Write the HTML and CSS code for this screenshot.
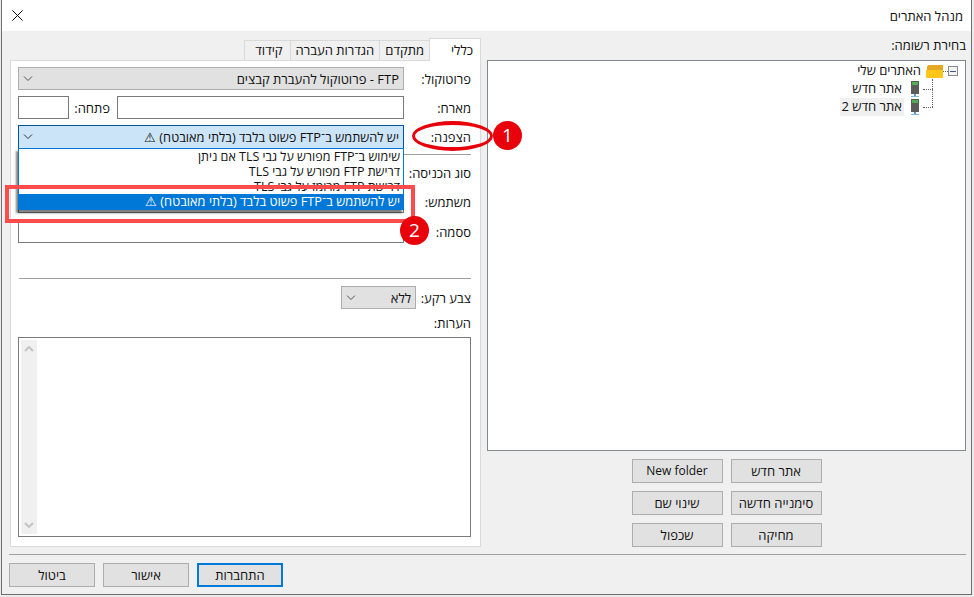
FILE: index.html
```html
<!DOCTYPE html>
<html lang="he" dir="rtl">
<head>
<meta charset="utf-8">
<title>מנהל האתרים</title>
<link rel="stylesheet" href="styles.css">
</head>
<body>
<div class="window">
  <header class="titlebar">
    <span class="title">מנהל האתרים</span>
    <svg class="close" width="11" height="11" viewBox="0 0 11 11"><path d="M.4.4l10.2 10.2M10.6.4L.4 10.6" stroke="#111" stroke-width="1" fill="none"/></svg>
  </header>
  <main class="main">
    <section class="sites">
      <div class="sites-label">בחירת רשומה:</div>
      <div class="tree">
        <div class="tree-row">
          <span class="expander"><span class="minus"></span></span><span class="dots-h"></span>
          <svg class="folder" width="17" height="13" viewBox="0 0 17 13"><path d="M1 5V1.500L2.500 0H17v5z" fill="#e5a823"/><path d="M0 5h17v7a1 1 0 0 1-1 1H1a1 1 0 0 1-1-1z" fill="#ffc61a"/></svg>
          <span class="node-text">האתרים שלי</span>
        </div>
        <div class="tree-row tree-child">
          <span class="dots-long"></span>
          <svg class="server" width="8" height="16" viewBox="0 0 8 16"><rect width="8" height="13" fill="#5a5a5a"/><rect x="1" y="1" width="6" height="3" fill="#4fae4f"/><rect x="3" y="13" width="2" height="2" fill="#5b9bd5"/><rect y="15" width="8" height="1" fill="#7db4e0"/></svg>
          <span class="node-text">אתר חדש</span>
        </div>
        <div class="tree-row tree-child">
          <span class="dots-long"></span>
          <svg class="server" width="8" height="16" viewBox="0 0 8 16"><rect width="8" height="13" fill="#5a5a5a"/><rect x="1" y="1" width="6" height="3" fill="#4fae4f"/><rect x="3" y="13" width="2" height="2" fill="#5b9bd5"/><rect y="15" width="8" height="1" fill="#7db4e0"/></svg>
          <span class="node-text node-selected">אתר חדש 2</span>
        </div>
      </div>
      <div class="site-buttons">
        <button class="btn">אתר חדש</button>
        <button class="btn btn-latin">New folder</button>
        <button class="btn">סימנייה חדשה</button>
        <button class="btn">שינוי שם</button>
        <button class="btn">מחיקה</button>
        <button class="btn">שכפול</button>
      </div>
    </section>
    <section class="settings">
      <nav class="tabs">
        <span class="tab tab-active">כללי</span>
        <span class="tab">מתקדם</span>
        <span class="tab">הגדרות העברה</span>
        <span class="tab tab-last">קידוד</span>
      </nav>
      <div class="panel">
        <div class="form-row">
          <label class="lbl">פרוטוקול:</label>
          <div class="select select-fill">
            <span>FTP - פרוטוקול להעברת קבצים</span>
            <svg class="chev" width="10" height="6" viewBox="0 0 10 6"><path d="M1 .5l4 4 4-4" fill="none" stroke="#555"/></svg>
          </div>
        </div>
        <div class="form-row row-host">
          <label class="lbl">מארח:</label>
          <div class="input input-host"></div>
          <label class="lbl-port">פתחה:</label>
          <div class="input input-port"></div>
        </div>
        <div class="form-row row-enc">
          <label class="lbl">הצפנה:</label>
          <div class="select select-fill select-focus">
            <span>יש להשתמש ב־FTP פשוט בלבד (בלתי מאובטח) ⚠</span>
            <svg class="chev" width="10" height="6" viewBox="0 0 10 6"><path d="M1 .5l4 4 4-4" fill="none" stroke="#333"/></svg>
          </div>
        </div>
        <div class="separator sep-top"></div>
        <div class="form-row row-login">
          <label class="lbl">סוג הכניסה:</label>
          <div class="input input-full"></div>
        </div>
        <div class="form-row row-user">
          <label class="lbl">משתמש:</label>
          <div class="input input-full"></div>
        </div>
        <div class="form-row row-pass">
          <label class="lbl">ססמה:</label>
          <div class="input input-full"></div>
        </div>
        <div class="separator sep-bottom"></div>
        <div class="form-row row-color">
          <label class="lbl lbl-color">צבע רקע:</label>
          <div class="select select-color">
            <span>ללא</span>
            <svg class="chev" width="10" height="6" viewBox="0 0 10 6"><path d="M1 .5l4 4 4-4" fill="none" stroke="#555"/></svg>
          </div>
        </div>
        <div class="notes-label">הערות:</div>
        <div class="notes">
          <div class="scrollbar">
            <svg width="10" height="6" viewBox="0 0 10 6"><path d="M1 5l4-4 4 4" fill="none" stroke="#c4c4c4" stroke-width="2"/></svg>
            <svg width="10" height="6" viewBox="0 0 10 6"><path d="M1 1l4 4 4-4" fill="none" stroke="#c4c4c4" stroke-width="2"/></svg>
          </div>
        </div>
      </div>
    </section>
  </main>
  <footer class="footer">
    <button class="btn btn-foot btn-default">התחברות</button>
    <button class="btn btn-foot">אישור</button>
    <button class="btn btn-foot">ביטול</button>
  </footer>
</div>

<ul class="dropdown">
  <li>שימוש ב־FTP מפורש על גבי TLS אם ניתן</li>
  <li>דרישת FTP מפורש על גבי TLS</li>
  <li>דרישת FTP מרומז על גבי TLS</li>
  <li class="dd-selected">יש להשתמש ב־FTP פשוט בלבד (בלתי מאובטח) ⚠</li>
</ul>

<div class="mark-ellipse"></div>
<div class="mark-badge badge-one">1</div>
<div class="mark-rect"></div>
<div class="mark-badge badge-two">2</div>
</body>
</html>
```
FILE: styles.css
```css
* { box-sizing: border-box; }
html, body { margin: 0; padding: 0; }
body {
  position: relative;
  width: 974px;
  height: 597px;
  overflow: hidden;
  background: #ececec;
  font: 13px/16px "Open Sans", "Liberation Sans", sans-serif;
  color: #111;
}
.window {
  width: 971px;
  height: 595px;
  margin-right: 2px;
  background: #f0f0f0;
  border: 1px solid #6e6e6e;
  border-top: 0;
  display: flex;
  flex-direction: column;
}
.titlebar {
  height: 31px;
  flex: none;
  background: #fff;
  display: flex;
  align-items: center;
  justify-content: space-between;
  padding: 0 8px 0 10px;
}
.main {
  flex: none;
  height: 524px;
  display: flex;
  gap: 6px;
  padding-left: 1px;
  margin: 0 5px 0 7px;
  border-bottom: 1px solid #a0a0a0;
}
.sites { width: 479px; flex: none; padding-top: 6px; }
.sites-label { height: 23px; }
.tree {
  height: 391px;
  background: #fff;
  border: 1px solid #828790;
  padding: 1px 7px 0 0;
}
.tree-row { display: flex; align-items: center; height: 18px; position: relative; }
.expander {
  width: 10px; height: 10px; flex: none;
  border: 1px solid #8a8a8a; background: #f2f2f2;
  display: flex; align-items: center; justify-content: center;
}
.minus { width: 6px; height: 1px; background: #3a5a8a; }
.dots-h { width: 5px; border-top: 1px dotted #666; }
.folder { margin-left: 3px; }
.node-text { padding: 0 2px; height: 18px; line-height: 17px; }
.tree-child { padding-right: 25px; }
.dots-long { width: 10px; margin-left: 4px; border-top: 1px dotted #666; }
.server { margin-left: 7px; }
.node-selected { background: #f0f0f0; }
.tree-child .dots-long::before {
  content: "";
  position: absolute;
  top: -1px;
  height: 10px;
  right: 25px;
  border-right: 1px dotted #666;
}
.tree-child + .tree-child .dots-long::before { top: -9px; height: 18px; }
.site-buttons {
  display: grid;
  grid-template-columns: 91px 91px;
  gap: 8px;
  justify-content: center;
  margin-top: 8px;
}
.btn {
  height: 24px;
  background: #e1e1e1;
  border: 1px solid #adadad;
  font: inherit;
  color: inherit;
  padding: 0;
}
.btn-latin { font-size: 12px; }
.settings { width: 471px; flex: none; padding-top: 6px; }
.tabs {
  display: flex;
  height: 23px;
  align-items: flex-end;
}
.tab {
  height: 20px;
  padding: 0 5px;
  background: #f0f0f0;
  border: 1px solid #d9d9d9;
  border-bottom: 0;
  border-right-width: 0;
  line-height: 19px;
  white-space: nowrap;
}
.tab-last { width: 46px; padding: 0 7px 0 0; }
.tab-active {
  height: 23px;
  width: 52px;
  padding: 0 7px;
  background: #fff;
  border-right-width: 1px;
  border-left-width: 1px;
  line-height: 22px;
  margin-bottom: -1px;
  position: relative;
  z-index: 1;
}
.panel {
  height: 487px;
  background: #fff;
  border: 1px solid #d9d9d9;
  padding: 6px 9px 0 7px;
}
.form-row { display: flex; align-items: center; height: 23px; }
.lbl { width: 67px; flex: none; }
.lbl-color { width: 55px; }
.row-host { margin-top: 6px; }
.row-enc { margin-top: 6px; height: 24px; }
.row-login { margin-top: 6px; }
.row-user { margin-top: 6px; }
.row-pass { margin-top: 7px; }
.select {
  display: flex; align-items: center; justify-content: space-between;
  height: 100%;
  background: #e1e1e1;
  border: 1px solid #adadad;
  padding: 0 4px;
}
.select-fill { width: 386px; }
.select-focus { background: #cce4f7; border-color: #005499; font-size: 12.8px; }
.input { height: 100%; background: #fff; border: 1px solid #7a7a7a; }
.input-full { width: 386px; }
.input-host { width: 287px; flex: none; }
.lbl-port { width: 48px; padding-right: 7px; flex: none; }
.input-port { width: 51px; flex: none; }
.separator { border-top: 1px solid #a0a0a0; height: 1px; }
.sep-top { margin: 5px 0 0 1px; }
.sep-bottom { margin: 35px 0 0 1px; }
.row-color { margin-top: 7px; }
.select-color { width: 75px; }
.notes-label { margin-top: 6px; height: 22px; }
.notes {
  height: 200px;
  background: #fff;
  border: 1px solid #7a7a7a;
  display: flex;
  justify-content: flex-end;
  padding: 2px;
}
.scrollbar {
  width: 16px;
  background: #f0f0f0;
  display: flex;
  flex-direction: column;
  justify-content: space-between;
  align-items: center;
  padding: 6px 0;
}
.footer {
  flex: 1;
  display: flex;
  padding-top: 8px;
  gap: 8px;
  margin-left: 7px;
  justify-content: flex-end;
}
.btn-foot { width: 86px; height: 24px; }
.btn-default { border: 2px solid #0078d7; }

.dropdown {
  position: absolute;
  left: 18px; top: 148px;
  width: 386px;
  margin: 0; padding: 0;
  list-style: none;
  background: #fff;
  border: 1px solid #0078d7;
  box-shadow: -2px 3px 2px rgba(0,0,0,.5);
}
.dropdown li { height: 15px; line-height: 15px; padding-right: 3px; white-space: nowrap; font-size: 12.5px; }
.dropdown .dd-selected { background: #0078d7; color: #fff; font-size: 12.8px; }
.mark-ellipse {
  position: absolute; left: 412px; top: 121px; width: 81px; height: 30px;
  border: solid #e8000b; border-width: 4px 3px; border-radius: 50%;
}
.mark-rect {
  position: absolute; left: 5px; top: 185px; width: 410px; height: 38px;
  border: 4px solid #ff4b4b;
}
.mark-badge {
  position: absolute; width: 29px; height: 29px; border-radius: 50%;
  background: #e8000b; color: #fff; text-align: center;
  font: 19px/29px "Open Sans", sans-serif;
}
.badge-one { left: 493px; top: 121px; }
.badge-two { left: 400px; top: 216px; }
```
